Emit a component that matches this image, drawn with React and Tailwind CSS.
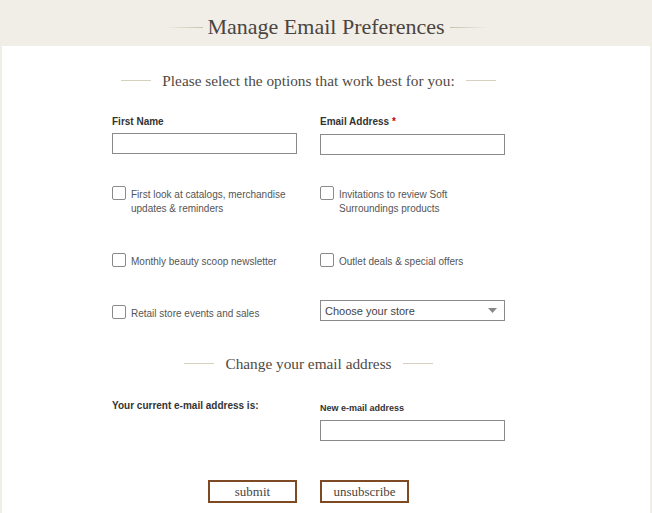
import React from "react";

const serif = { fontFamily: '"Liberation Serif", "Times New Roman", serif' };

function Heading({ children, lineW = "w-[30px]", gap = "gap-[11px]", className = "" }) {
  return (
    <div className={`flex items-center justify-center ${gap} ${className}`}>
      <div className={`h-px ${lineW} bg-[#d8d0bf]`} />
      <div className="text-[#4f4a44] text-[15.3px] leading-none" style={serif}>{children}</div>
      <div className={`h-px ${lineW} bg-[#d8d0bf]`} />
    </div>
  );
}

function Box() {
  return <div className="w-[14px] h-[14px] shrink-0 border border-[#8a8a8a] rounded-[2px] bg-white" />;
}

function Check({ children, className = "" }) {
  return (
    <div className={`flex items-start gap-[5px] ${className}`}>
      <Box />
      <div className="text-[10px] leading-[14px] text-[#555] pt-[2px]">{children}</div>
    </div>
  );
}

function Input({ className = "" }) {
  return <div className={`h-[21px] w-[185px] border border-[#8a8a8a] bg-white ${className}`} />;
}

export default function App() {
  return (
    <div className="w-[652px] h-[513px] bg-white overflow-hidden relative" style={{ fontFamily: '"Liberation Sans", Arial, sans-serif' }}>
      <div className="h-[46px] bg-[#f1eee8] flex items-center justify-center gap-[5px] pt-[8px]">
        <div className="h-px w-[38px] bg-gradient-to-r from-[#f1eee8] to-[#c9c0ae]" />
        <div className="text-[#4a4540] text-[22px] leading-none" style={serif}>Manage Email Preferences</div>
        <div className="h-px w-[38px] bg-gradient-to-l from-[#f1eee8] to-[#c9c0ae]" />
      </div>
      <div className="absolute left-0 top-[46px] bottom-0 w-[2px] bg-[#f1eee8]" />
      <div className="absolute right-0 top-[46px] bottom-0 w-[2px] bg-[#f1eee8]" />

      <div className="w-[393px] ml-[112px]">
        <Heading className="mt-[27px]">Please select the options that work best for you:</Heading>

        <div className="grid grid-cols-[185px_185px] gap-x-[23px] mt-[28px]">
          <div>
            <div className="text-[10px] font-bold text-[#333] leading-[12px]">First Name</div>
            <Input className="mt-[5px]" />
          </div>
          <div>
            <div className="text-[10px] font-bold text-[#333] leading-[12px]">Email Address <span className="text-[#c00]">*</span></div>
            <Input className="mt-[6px]" />
          </div>
        </div>

        <div className="grid grid-cols-[185px_185px] gap-x-[23px] mt-[31px]">
          <Check>First look at catalogs, merchandise<br />updates &amp; reminders</Check>
          <Check>Invitations to review Soft<br />Surroundings products</Check>
          <Check className="mt-[37px]">Monthly beauty scoop newsletter</Check>
          <Check className="mt-[37px]">Outlet deals &amp; special offers</Check>
          <Check className="mt-[36px]">Retail store events and sales</Check>
          <div className="mt-[31px] h-[21px] border border-[#8a8a8a] bg-white flex items-center justify-between pl-[4px] pr-[7px]">
            <span className="text-[11px] text-[#444]">Choose your store</span>
            <svg width="9" height="5" viewBox="0 0 9 5"><path d="M0 0h9L4.5 5z" fill="#888" /></svg>
          </div>
        </div>

        <Heading className="mt-[35px]">Change your email address</Heading>

        <div className="grid grid-cols-[185px_185px] gap-x-[23px] mt-[28px]">
          <div className="text-[10px] font-bold text-[#333] leading-[12px]">Your current e-mail address is:</div>
          <div className="pt-[2px]">
            <div className="text-[9px] font-bold text-[#333] leading-[12px]">New e-mail address</div>
            <Input className="mt-[6px]" />
          </div>
        </div>

        <div className="flex mt-[39px] ml-[96px] gap-[23px]">
          <button className="w-[89px] h-[23px] border-2 border-[#7d4a24] bg-white text-[13px] text-[#4a4540] leading-none" style={serif}>submit</button>
          <button className="w-[89px] h-[23px] border-2 border-[#7d4a24] bg-white text-[13px] text-[#4a4540] leading-none" style={serif}>unsubscribe</button>
        </div>
      </div>
    </div>
  );
}
